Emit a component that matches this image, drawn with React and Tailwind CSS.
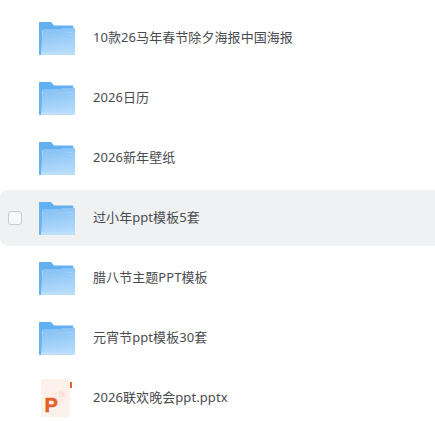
import React from "react";

const items = [
  { name: "10款26马年春节除夕海报中国海报", type: "folder" },
  { name: "2026日历", type: "folder" },
  { name: "2026新年壁纸", type: "folder" },
  { name: "过小年ppt模板5套", type: "folder", active: true },
  { name: "腊八节主题PPT模板", type: "folder" },
  { name: "元宵节ppt模板30套", type: "folder" },
  { name: "2026联欢晚会ppt.pptx", type: "ppt" },
];

function FolderIcon({ id }) {
  return (
    <svg width="36" height="33" viewBox="0 0 36 33" className="shrink-0">
      <defs>
        <linearGradient id={`front-${id}`} x1="0" y1="0" x2="0.2" y2="1">
          <stop offset="0" stopColor="#80bff4" />
          <stop offset="1" stopColor="#b5dbfb" />
        </linearGradient>
      </defs>
      <path d="M0 1C0 .4.4 0 1 0h11l3 3.500H33.500c.5 0 .8.300.8.800V9H0z" fill="#62b0ef" />
      <path d="M0 6h3v27H1c-.6 0-1-.4-1-1z" fill="#68b2ee" />
      <path d="M2 33 3.500 7H21l2-1h12.200c.5 0 .8.400.8.800V33z" fill={`url(#front-${id})`} />
      <path d="M28 10h6v1h-6zM29 13h5v1h-5z" fill="#a3d0f6" />
      <path d="M2 30h34v3H2z" fill="#c3e2fc" opacity=".55" />
    </svg>
  );
}

function PptIcon() {
  return (
    <svg width="36" height="38" viewBox="0 0 36 38" className="shrink-0">
      <rect x="2" y="0" width="29" height="38" rx="2" fill="#fdf1ec" />
      <path d="M20 11a7 7 0 0 1 7 7h-7z" fill="#fbe2d8" />
      <path d="M18 13a7 7 0 1 0 7 7h-7z" fill="#fde9e1" />
      <path d="M31 3h2v6h-2z" fill="#e8642c" />
      <text x="5.500" y="33" fontSize="20" fontWeight="700" fill="#e2602a" stroke="#e2602a" strokeWidth=".5" fontFamily="'Liberation Sans', sans-serif">P</text>
    </svg>
  );
}

function Row({ item, id }) {
  return (
    <div className={`flex h-14 shrink-0 items-center rounded-l-lg pl-[8px] ${item.active ? "bg-[#eff1f3]" : ""}`}>
      <div className={`h-[14px] w-[14px] shrink-0 rounded-[3px] border border-[#c9cbd1] bg-[#f7f8f9] ${item.active ? "" : "invisible"}`} />
      <div className="ml-[17px] flex w-[36px] shrink-0 justify-center">
        {item.type === "folder" ? <FolderIcon id={id} /> : <PptIcon />}
      </div>
      <div className="ml-[18px] pb-[2px] text-[13px] leading-5 tracking-[0.07px] text-[#4a4b50]">{item.name}</div>
    </div>
  );
}

export default function App() {
  return (
    <div
      className="flex h-[421px] w-[435px] flex-col gap-1 overflow-hidden bg-white pt-[10px]"
      style={{ fontFamily: "'Noto Sans', 'Noto Sans CJK SC', sans-serif" }}
    >
      {items.map((item, i) => (
        <Row key={item.name} item={item} id={i} />
      ))}
    </div>
  );
}
